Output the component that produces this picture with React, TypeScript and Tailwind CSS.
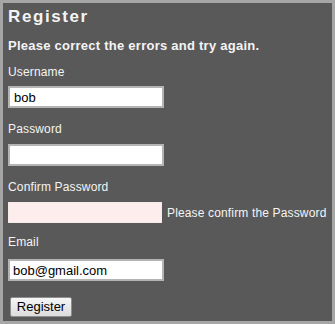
export default function App() {
  return (
    <div className="h-[324px] w-[335px] border-[3px] border-[#a6a6a6] bg-[#595959] pl-[5px] pt-[3px] font-['Liberation_Sans',Arial,sans-serif] text-[#f4f4f4]">
      <form className="flex flex-col items-start" onSubmit={(e) => e.preventDefault()}>
        <h1 className="mt-[1px] text-[17px] font-bold leading-[20px] tracking-[1.6px]">Register</h1>
        <p className="mt-[11px] text-[13px] font-bold leading-[15px] tracking-[0.25px]">
          Please correct the errors and try again.
        </p>

        <label className="mt-[12px] text-[12px] leading-[14px] tracking-[0.15px]">Username</label>
        <input
          defaultValue="bob"
          className="mt-[7px] h-[22px] w-[156px] border-2 border-[#b4b4b4] bg-white px-[4px] text-[13px] text-black outline-none"
        />

        <label className="mt-[14px] text-[12px] leading-[14px] tracking-[0.15px]">Password</label>
        <input
          type="password"
          className="mt-[8px] h-[22px] w-[156px] border-2 border-[#b4b4b4] bg-white px-[4px] text-[13px] text-black outline-none"
        />

        <label className="mt-[14px] text-[12px] leading-[14px] tracking-[0.15px]">Confirm Password</label>
        <div className="mt-[8px] flex items-center">
          <input
            type="password"
            className="h-[21px] w-[154px] border border-[#f6eaea] bg-[#fdeded] px-[3px] text-[13px] text-black outline-none"
          />
          <span className="ml-[5px] text-[12px] leading-[14px] tracking-[0.15px]">Please confirm the Password</span>
        </div>

        <label className="mt-[12px] text-[12px] leading-[14px] tracking-[0.15px]">Email</label>
        <input
          defaultValue="bob@gmail.com"
          className="mt-[10px] h-[22px] w-[156px] border-2 border-[#b4b4b4] bg-white px-[3px] text-[13px] text-black outline-none"
        />

        <button
          type="submit"
          className="ml-[2px] mt-[16px] h-[20px] w-[62px] rounded-[2px] border border-[#8e8e8e] bg-gradient-to-b from-[#f6f6f6] to-[#dcdcdc] text-[13px] leading-[18px] text-black"
        >
          Register
        </button>
      </form>
    </div>
  );
}
